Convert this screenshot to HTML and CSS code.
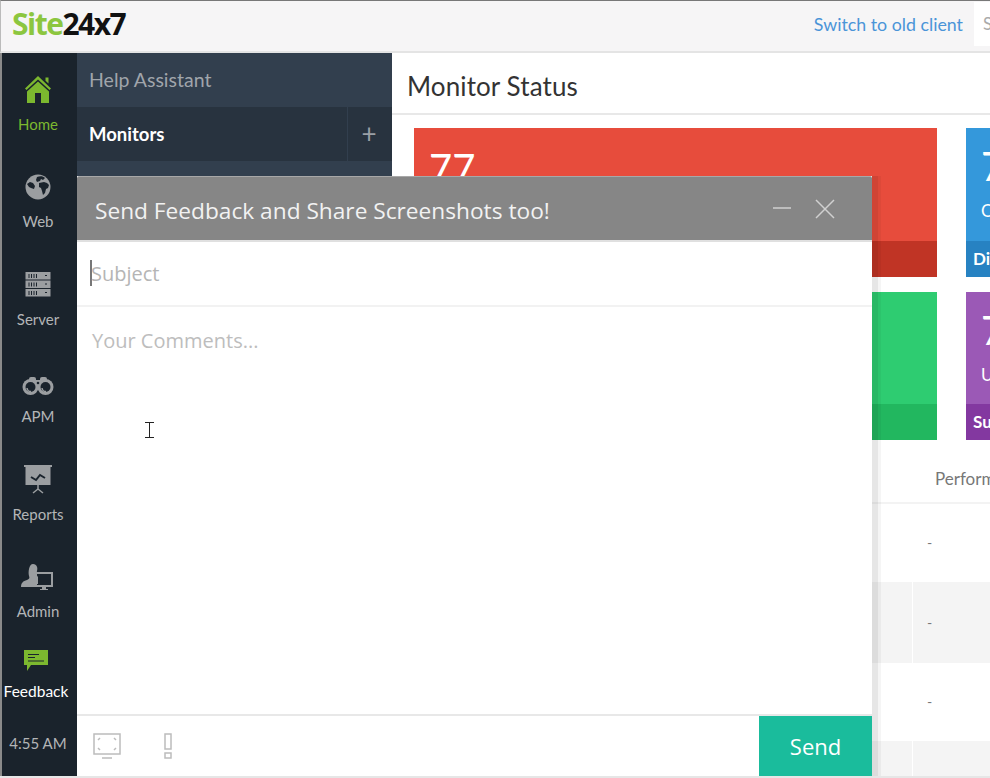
FILE: index.html
```html
<!DOCTYPE html>
<html lang="en">
<head>
<meta charset="utf-8">
<title>Site24x7</title>
<link rel="stylesheet" href="styles.css">
</head>
<body>
<div class="app">
  <header class="topbar">
    <div class="logo"><span class="logo-site">Site</span><span class="logo-num">24x7</span></div>
    <a class="old-client">Switch to old client</a>
    <div class="search">S</div>
  </header>
  <div class="main">
    <nav class="rail">
      <div class="rail-item active">
        <svg class="rail-icon" viewBox="0 0 34 34"><path class="green" d="M17 3 L30 15.500 L28.500 17 L17 6.500 L5.500 17 L4 15.500Z M24.500 4.500h3v6l-3-2.800z"/><path class="green" fill-rule="evenodd" d="M17 8.500 L28 18.500V30H6V18.500Z M14 20v10h6V20z"/></svg>
        <span>Home</span>
      </div>
      <div class="rail-item">
        <svg class="rail-icon" viewBox="0 0 34 34"><circle class="gray" cx="17" cy="17" r="12.500"/><path class="dark" d="M16 7c3-1 6-1 8 1l-2 2-2-1-1 2-3 1-1-2zM18 13l5-1 3 1 2 2-1 3-2 1-1 4-2 2-1-4-1-3-2-1zM6 14l3-2 3 1 2 3-1 3-3-1-2-1z"/></svg>
        <span>Web</span>
      </div>
      <div class="rail-item">
        <svg class="rail-icon" viewBox="0 0 34 34"><g class="gray"><rect x="4.500" y="4" width="25" height="7.500"/><rect x="4.500" y="12.500" width="25" height="7.500"/><rect x="4.500" y="21" width="25" height="7.500"/></g><path class="dark-stroke" d="M8 6v4M10.500 6v4M13 6v4M15.500 6v4M8 14.500v4M10.500 14.500v4M13 14.500v4M15.500 14.500v4M8 23v4M10.500 23v4M13 23v4M15.500 23v4M24 7.500h2M24 16h2M24 24.500h2"/></svg>
        <span>Server</span>
      </div>
      <div class="rail-item">
        <svg class="rail-icon" viewBox="0 0 34 34"><g class="gray"><circle cx="9.500" cy="22" r="8"/><circle cx="24.500" cy="22" r="8"/><rect x="8" y="12" width="7" height="5" rx="2"/><rect x="19" y="12" width="7" height="5" rx="2"/><rect x="14" y="15" width="6" height="8"/></g><circle class="dark" cx="9.500" cy="22" r="5"/><circle class="dark" cx="24.500" cy="22" r="5"/><circle class="dark" cx="17" cy="18" r="1.300"/><path class="gray-stroke" d="M6 23a4 4 0 0 0 4 3.500M21 23a4 4 0 0 0 4 3.500"/></svg>
        <span>APM</span>
      </div>
      <div class="rail-item">
        <svg class="rail-icon" viewBox="0 0 34 34"><path class="gray" d="M3 2h28v2h-1.500v18h-25V4H3z"/><path class="dark-stroke thick" d="M10 14l5 3 4-5 5 3"/><path class="gray-stroke" d="M17 22v5M17 26l-5 4M17 26l5 4"/></svg>
        <span>Reports</span>
      </div>
      <div class="rail-item">
        <svg class="rail-icon" viewBox="0 0 34 34"><path class="gray" d="M12 1c4 0 5 4 4 7-1 3 0 5 1 6v7h-1v3H0c0-4 2-6 6-7 2-1 3-2 2-4-1-4 0-12 4-12z"/><path class="gray" fill-rule="evenodd" d="M14 9h18v15H25v2h2v1h-8v-1h2v-2h-7z M16 11v11h14V11z"/></svg>
        <span>Admin</span>
      </div>
      <div class="rail-item feedback">
        <svg class="rail-icon small" viewBox="0 0 24 21"><path class="green" d="M0 0h24v15H7l-4 6v-6H0z"/><path class="dark-stroke" d="M4 4.500h11M4 7.500h7M4 11h16"/></svg>
        <span>Feedback</span>
      </div>
      <div class="rail-time">4:55 AM</div>
    </nav>
    <aside class="assist">
      <div class="assist-help">Help Assistant</div>
      <div class="assist-monitors">
        <span class="assist-title">Monitors</span>
        <span class="assist-add">+</span>
      </div>
    </aside>
    <section class="content">
      <h1 class="content-title">Monitor Status</h1>
      <div class="cards">
        <div class="card red"><div class="card-body"><div class="card-num">77</div></div><div class="card-foot">Down</div></div>
        <div class="card blue"><div class="card-body"><div class="card-num">7</div><div class="card-sub">Ok</div></div><div class="card-foot">Discovery</div></div>
        <div class="card green-card"><div class="card-body"><div class="card-num">12</div></div><div class="card-foot">Up</div></div>
        <div class="card purple"><div class="card-body"><div class="card-num">7</div><div class="card-sub">Up</div></div><div class="card-foot">Suspended</div></div>
      </div>
      <div class="table">
        <div class="table-head"><span class="cell">Performance</span></div>
        <div class="table-row"><span class="col-a"></span><span class="dash">-</span></div>
        <div class="table-row alt"><span class="col-a"></span><span class="dash">-</span></div>
        <div class="table-row"><span class="col-a"></span><span class="dash">-</span></div>
        <div class="table-row alt"><span class="col-a"></span></div>
      </div>
    </section>
  </div>
  <div class="page-foot"></div>

  <div class="dialog">
    <div class="dialog-head">
      <span class="dialog-title">Send Feedback and Share Screenshots too!</span>
      <svg class="dialog-ctl" viewBox="0 0 64 24"><path d="M2 11h18M45 3l18 18M63 3L45 21"/></svg>
    </div>
    <div class="dialog-subject"><span class="caret"></span><span>Subject</span></div>
    <div class="dialog-comments">Your Comments...</div>
    <div class="dialog-foot">
      <svg class="foot-shot" viewBox="0 0 28 26"><rect x="1" y="1" width="26" height="20"/><path d="M9 25h10M5 7l2-2M23 7l-2-2M5 15l2 2M23 15l-2 2"/></svg>
      <svg class="foot-alert" viewBox="0 0 8 26"><rect x="1" y="1" width="6" height="15"/><rect x="1" y="20" width="6" height="5"/></svg>
      <button class="send">Send</button>
    </div>
  </div>
  <svg class="ibeam" viewBox="0 0 9 16"><path d="M0 .5h9M0 15.500h9M4.500 .5v15"/></svg>
</div>
</body>
</html>
```
FILE: styles.css
```css
* { box-sizing: border-box; }
html, body { margin: 0; height: 100%; background: #fff; overflow: hidden; }
body { font-family: Lato, "Liberation Sans", sans-serif; }

.app {
  position: relative;
  width: 990px;
  height: 778px;
  display: flex;
  flex-direction: column;
  overflow: hidden;
  background: #fff;
}

.topbar {
  height: 53px;
  flex: none;
  display: flex;
  align-items: flex-start;
  background: #f6f5f6;
  border-top: 1px solid #787878;
  border-bottom: 2px solid #e4e4e4;
  border-left: 1px solid #bbb;
}
.logo {
  margin: 5px 0 0 11px;
  font: 700 30px/36px "Open Sans", sans-serif;
  letter-spacing: -1.500px;
}
.logo-site { color: #8cc63f; }
.logo-num { color: #111; }
.old-client {
  margin: 13px 11px 0 auto;
  font-size: 17.800px;
  line-height: 20px;
  color: #4a94d8;
}
.search {
  width: 16px;
  height: 44px;
  margin-top: 1px;
  padding: 12px 0 0 9px;
  background: #fff;
  color: #aaa;
  font-size: 17px;
  line-height: 20px;
  overflow: hidden;
}

.main { flex: 1; min-height: 0; display: flex; }

.rail {
  width: 77px;
  flex: none;
  padding-right: 3px;
  background: #1a232c;
  border-left: 2px solid #8a8a8a;
  color: #b3b5b7;
  font-size: 15px;
  display: flex;
  flex-direction: column;
  align-items: stretch;
}
.rail-item {
  height: 97.400px;
  flex: none;
  padding-top: 20px;
  display: flex;
  flex-direction: column;
  align-items: center;
  gap: 8px;
  line-height: 18px;
}
.rail-item:nth-child(4) .rail-icon { margin-top: 0; }
.rail-item:nth-child(6) .rail-icon { margin-top: 3px; margin-bottom: -3px; }
.rail-item.active { color: #7cb82f; }
.rail-icon { width: 34px; height: 34px; flex: none; }
.rail-item.feedback {
  height: 96px;
  padding-top: 13px;
  padding-right: 4px;
  gap: 11px;
  color: #fff;
  font-size: 15.500px;
  white-space: nowrap;
}
.rail-icon.small { width: 24px; height: 21px; }
.rail-time { margin-top: 1px; text-align: center; font-size: 15px; line-height: 18px; white-space: nowrap; }

.green { fill: #7cb82f; }
.gray { fill: #9b9ea1; }
.dark { fill: #1a232c; }
.dark-stroke { fill: none; stroke: #1a232c; stroke-width: 1; }
.dark-stroke.thick { stroke-width: 2; }
.gray-stroke { fill: none; stroke: #9b9ea1; stroke-width: 1.500; }

.assist {
  width: 315px;
  flex: none;
  background: #323f4e;
}
.assist-help {
  height: 54px;
  padding-left: 12px;
  color: #a0a5ab;
  font-size: 19.500px;
  line-height: 53px;
}
.assist-monitors {
  height: 54px;
  display: flex;
  background: #28333f;
  color: #fff;
}
.assist-title { flex: 1; padding-left: 12px; font-size: 18.500px; font-weight: 700; line-height: 54px; }
.assist-add {
  width: 45px;
  border-left: 1px solid #323f4e;
  color: #9aa0a6;
  font-size: 26px;
  line-height: 52px;
  text-align: center;
  padding-right: 2px;
}

.content { flex: 1; min-width: 0; overflow: hidden; }
.content-title {
  height: 62px;
  margin: 0;
  padding: 17px 0 0 15px;
  border-bottom: 2px solid #e8e8e8;
  color: #333;
  font-size: 26px;
  font-weight: 400;
  line-height: 32px;
  letter-spacing: .1px;
}
.cards {
  display: grid;
  grid-template-columns: 523px 523px;
  grid-template-rows: 149px 148px;
  gap: 15px 29px;
  margin: 13px 0 0 22px;
  color: #fff;
}
.card { display: flex; flex-direction: column; overflow: hidden; }
.card-body { flex: 1; padding: 16px 15px 0; }
.card-num { font-size: 40px; line-height: 48px; }
.card-sub { margin-top: 11px; font-size: 17px; line-height: 20px; }
.blue .card-body, .purple .card-body { padding-top: 14px; }
.card-foot { height: 36px; padding-left: 7px; font-size: 17px; font-weight: 700; line-height: 36px; }
.red { background: #e74c3c; }
.red .card-foot { background: #c03425; }
.blue { background: #3498db; }
.blue .card-foot { background: #2782c2; }
.green-card { background: #2ecc71; }
.green-card .card-foot { background: #22b75f; }
.purple { background: #9b59b6; }
.purple .card-foot { background: #8338a0; }

.table { margin-top: 23px; color: #777; }
.table-head {
  height: 41px;
  border-bottom: 2px solid #f3f3f3;
  font-size: 17px;
  line-height: 32px;
}
.table-head .cell { padding-left: 543px; }
.table-row { display: flex; height: 78px; line-height: 78px; }
.table-row.alt { height: 81px; line-height: 81px; background: #f4f4f4; }
.col-a { width: 521px; flex: none; border-right: 1px solid #fff; }
.table-row:not(.alt) .col-a { border-right: 0; }
.dash { padding-left: 14px; font-size: 14px; }

.page-foot { height: 2px; flex: none; background: #e6e6e6; position: relative; }

.dialog {
  position: absolute;
  left: 77px;
  top: 176px;
  width: 795px;
  height: 600px;
  display: flex;
  flex-direction: column;
  background: #fff;
  box-shadow: 6px 0 0 rgba(0, 0, 0, .06), 9px 0 0 rgba(0, 0, 0, .04);
  font-family: "Open Sans", "Noto Sans", sans-serif;
}
.dialog-head {
  height: 66px;
  flex: none;
  display: flex;
  align-items: center;
  justify-content: space-between;
  padding: 5px 37px 0 18px;
  background: #868686;
  border-bottom: 2px solid #e0e0e0;
  border-top: 1px solid #a8a8a8;
  border-radius: 2px 2px 0 0;
  color: #fff;
}
.dialog-title { font-size: 22.700px; line-height: 30px; color: #f2f2f2; }
.dialog-ctl { width: 64px; height: 24px; margin-top: -5px; fill: none; stroke: #d0d0d0; stroke-width: 1.500; }
.dialog-subject {
  height: 65px;
  flex: none;
  display: flex;
  align-items: center;
  padding: 0 0 1px 13px;
  border-bottom: 2px solid #f2f2f2;
  color: #b5b5b5;
  font-size: 20px;
}
.caret { width: 2px; height: 26px; margin-right: -1px; background: #777; }
.dialog-comments {
  flex: 1;
  padding: 19px 0 0 15px;
  color: #bdbdbd;
  font-size: 20px;
  line-height: 30px;
}
.dialog-foot {
  height: 62px;
  flex: none;
  display: flex;
  align-items: center;
  padding-left: 16px;
  border-top: 2px solid #e8e8e8;
}
.foot-shot { width: 28px; height: 26px; fill: none; stroke: #bcbcbc; stroke-width: 1.500; }
.foot-alert { width: 8px; height: 26px; margin-left: 43px; fill: none; stroke: #bcbcbc; stroke-width: 1.500; }
.send {
  width: 113px;
  height: 60px;
  margin-left: auto;
  border: 0;
  background: #1abc9c;
  color: #fff;
  font: 400 22px "Open Sans", sans-serif;
}

.ibeam {
  position: absolute;
  left: 145px;
  top: 422px;
  width: 9px;
  height: 16px;
  fill: none;
  stroke: #222;
  stroke-width: 1;
}
```
